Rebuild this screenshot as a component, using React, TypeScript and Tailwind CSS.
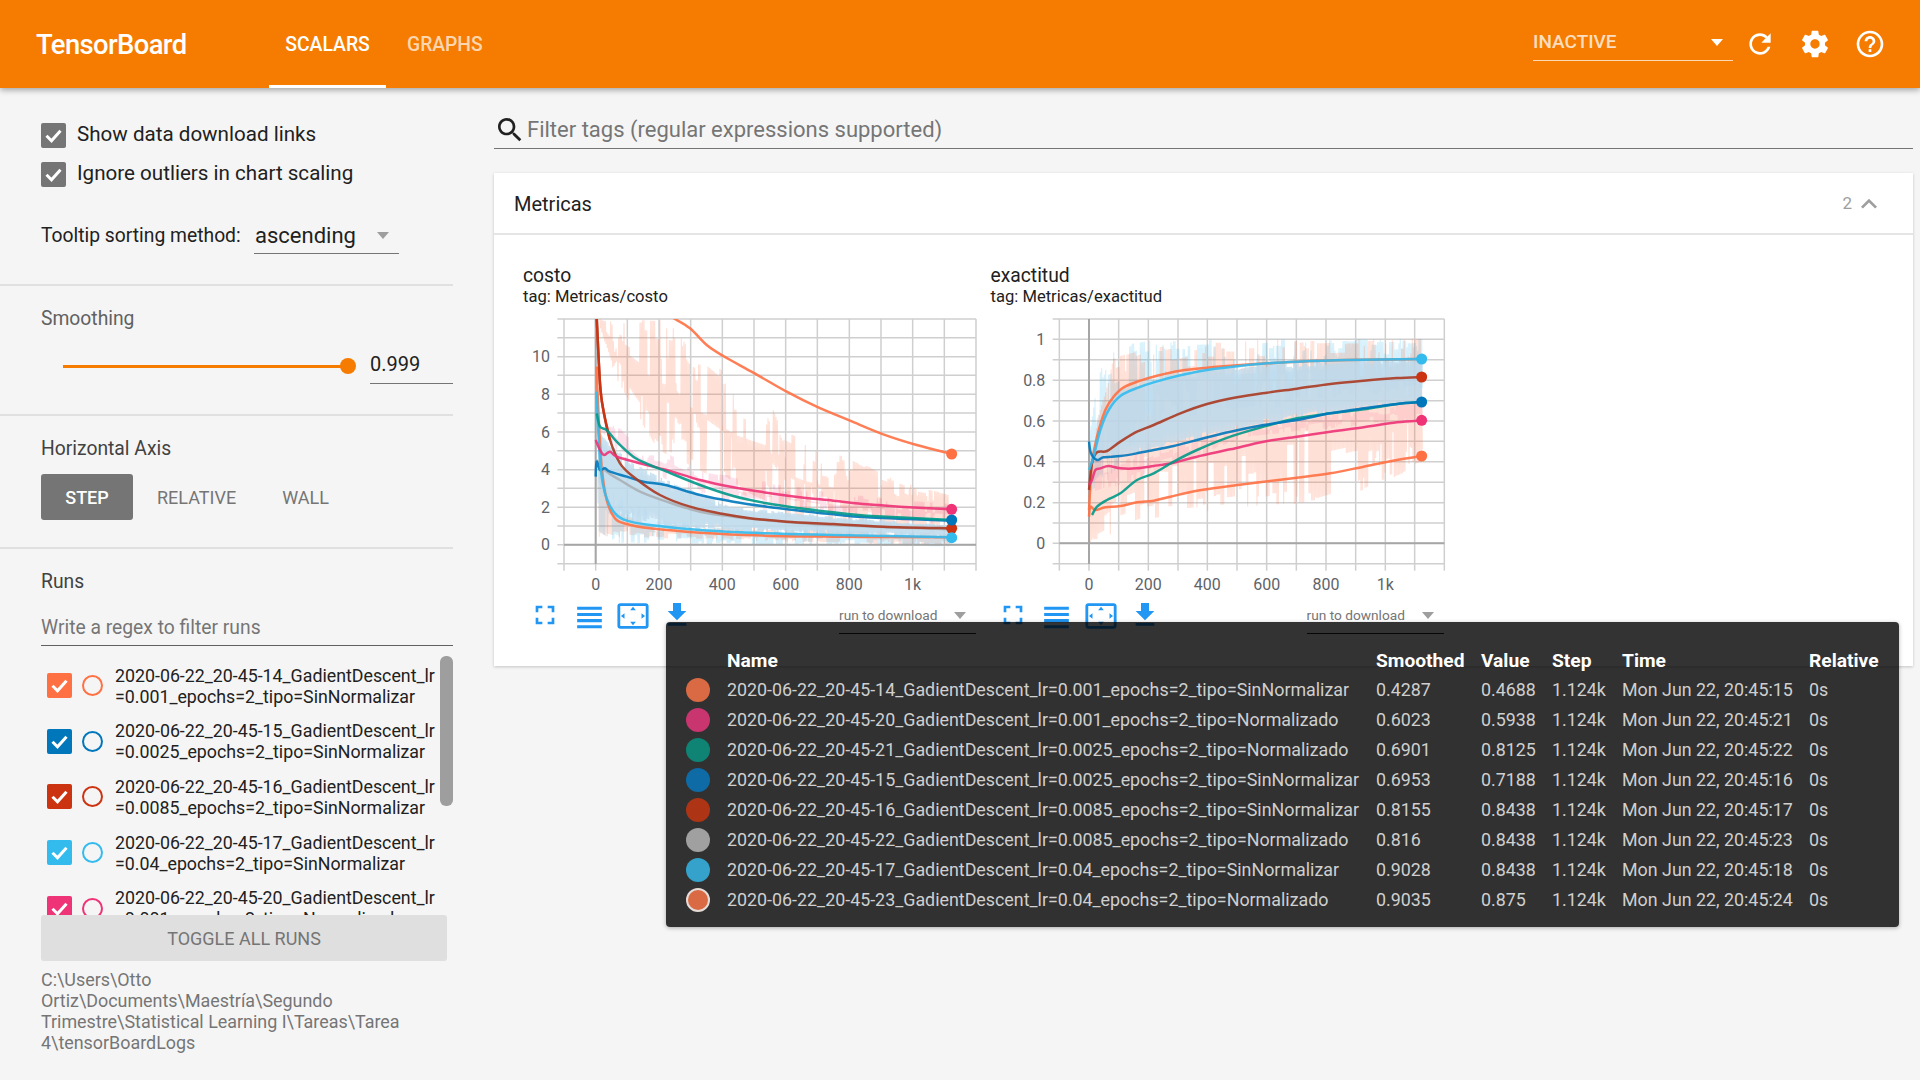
import React from "react";

type Pt = [number, number];

const ICONS = {
  refresh:
    "M17.65 6.35C16.2 4.9 14.21 4 12 4c-4.42 0-7.99 3.58-7.99 8s3.57 8 7.99 8c3.73 0 6.84-2.55 7.73-6h-2.08c-.82 2.33-3.04 4-5.65 4-3.31 0-6-2.69-6-6s2.69-6 6-6c1.66 0 3.14.69 4.22 1.78L13 11h7V4l-2.35 2.35z",
  settings:
    "M19.43 12.98c.04-.32.07-.64.07-.98s-.03-.66-.07-.98l2.11-1.65c.19-.15.24-.42.12-.64l-2-3.46c-.12-.22-.39-.3-.61-.22l-2.49 1c-.52-.4-1.08-.73-1.69-.98l-.38-2.65C14.46 2.18 14.25 2 14 2h-4c-.25 0-.46.18-.49.42l-.38 2.65c-.61.25-1.17.59-1.69.98l-2.49-1c-.23-.09-.49 0-.61.22l-2 3.46c-.13.22-.07.49.12.64l2.11 1.65c-.04.32-.07.65-.07.98s.03.66.07.98l-2.11 1.65c-.19.15-.24.42-.12.64l2 3.46c.12.22.39.3.61.22l2.49-1c.52.4 1.08.73 1.69.98l.38 2.65c.03.24.24.42.49.42h4c.25 0 .46-.18.49-.42l.38-2.65c.61-.25 1.17-.59 1.69-.98l2.49 1c.23.09.49 0 .61-.22l2-3.46c.12-.22.07-.49-.12-.64l-2.11-1.65zM12 15.5c-1.93 0-3.5-1.57-3.5-3.5s1.57-3.5 3.5-3.5 3.5 1.57 3.5 3.5-1.57 3.5-3.5 3.5z",
  help:
    "M11 18h2v-2h-2v2zm1-16C6.48 2 2 6.48 2 12s4.48 10 10 10 10-4.48 10-10S17.52 2 12 2zm0 18c-4.41 0-8-3.59-8-8s3.59-8 8-8 8 3.59 8 8-3.59 8-8 8zm0-14c-2.21 0-4 1.79-4 4h2c0-1.1.9-2 2-2s2 .9 2 2c0 2-3 1.75-3 5h2c0-2.25 3-2.5 3-5 0-2.21-1.79-4-4-4z",
  search:
    "M15.5 14h-.79l-.28-.27C15.41 12.59 16 11.11 16 9.5 16 5.91 13.09 3 9.5 3S3 5.91 3 9.5 5.91 16 9.5 16c1.61 0 3.09-.59 4.23-1.57l.27.28v.79l5 4.99L20.49 19l-4.99-5zm-6 0C7.01 14 5 11.99 5 9.5S7.01 5 9.5 5 14 7.01 14 9.5 11.99 14 9.5 14z",
  fullscreen: "M7 14H5v5h5v-2H7v-3zm-2-4h2V7h3V5H5v5zm12 7h-3v2h5v-5h-2v3zM14 5v2h3v3h2V5h-5z",
  headline: "M4 15h16v-2H4v2zm0 4h16v-2H4v2zm0-8h16V9H4v2zm0-6v2h16V5H4z",
  overscan:
    "M12.01 5.5L10 8h4l-1.99-2.5zM18 10v4l2.5-1.99L18 10zM6 10l-2.5 2.01L6 14v-4zm8 6h-4l2.01 2.5L14 16zm7-13H3c-1.1 0-2 .9-2 2v14c0 1.1.9 2 2 2h18c1.1 0 2-.9 2-2V5c0-1.1-.9-2-2-2zm0 16.01H3V4.99h18v14.02z",
  download: "M19 9h-4V3H9v6H5l7 7 7-7zM5 18v2h14v-2H5z",
  less: "M12 8l-6 6 1.41 1.41L12 10.83l4.59 4.58L18 14z",
};

function Icon({ d, className }: { d: string; className: string }) {
  return (
    <svg viewBox="0 0 24 24" className={className} fill="currentColor">
      <path d={d} />
    </svg>
  );
}

const C = {
  orange: "#ff7043",
  blue: "#0077bb",
  red: "#cc3311",
  brown: "#aa3a22",
  cyan: "#33bbee",
  pink: "#ee3377",
  teal: "#009988",
  grey: "#aab0b5",
};

// chart coordinates are traced at 3x screen pixels, hence the large numbers
function lerp(pts: Pt[], x: number) {
  if (x <= pts[0][0]) return pts[0][1];
  for (let i = 1; i < pts.length; i++) {
    if (x <= pts[i][0]) {
      const [x0, y0] = pts[i - 1];
      const [x1, y1] = pts[i];
      return y0 + ((y1 - y0) * (x - x0)) / (x1 - x0);
    }
  }
  return pts[pts.length - 1][1];
}

function smooth(p: Pt[]) {
  let d = `M${p[0][0]} ${p[0][1]}`;
  for (let i = 0; i < p.length - 1; i++) {
    const a = p[Math.max(i - 1, 0)];
    const b = p[i];
    const c = p[i + 1];
    const e = p[Math.min(i + 2, p.length - 1)];
    const c1x = b[0] + (c[0] - a[0]) / 6;
    const c1y = b[1] + (c[1] - a[1]) / 6;
    const c2x = c[0] - (e[0] - b[0]) / 6;
    const c2y = c[1] - (e[1] - b[1]) / 6;
    d += `C${c1x.toFixed(1)} ${c1y.toFixed(1)} ${c2x.toFixed(1)} ${c2y.toFixed(1)} ${c[0]} ${c[1]}`;
  }
  return d;
}

function rng(seed: number) {
  let s = seed;
  return () => {
    s = (s + 0x6d2b79f5) | 0;
    let t = Math.imul(s ^ (s >>> 15), 1 | s);
    t = (t + Math.imul(t ^ (t >>> 7), 61 | t)) ^ t;
    return ((t ^ (t >>> 14)) >>> 0) / 4294967296;
  };
}

type Band = { color: string; opacity: number; hi: Pt[]; lo: Pt[]; x0: number; x1: number; rough: number };

function bandPath(b: Band, seed: number) {
  const r = rng(seed);
  let d = "";
  let up = true;
  let jagHi = 0;
  let jagLo = 0;
  for (let x = b.x0; x <= b.x1; x += 2) {
    if (r() < 0.22) {
      jagHi = r() * r() * b.rough;
      jagLo = r() * r() * b.rough;
    }
    const hi = lerp(b.hi, x);
    const lo = lerp(b.lo, x);
    const span = lo - hi;
    const y = up ? hi + span * Math.min(jagHi, 0.48) : lo - span * Math.min(jagLo, 0.48);
    d += `${d ? "L" : "M"}${x} ${y.toFixed(1)}`;
    up = !up;
  }
  return d;
}

type ChartSpec = {
  id: string;
  vb: [number, number];
  xs: number[];
  xLabels: [number, string][];
  ys: number[];
  yLabels: [number, string][];
  labelRight: number;
  zeroX: number;
  zeroY: number;
  frame: [number, number, number, number];
  bands: Band[];
  lines: { color: string; pts: Pt[] }[];
  markers: { color: string; x: number; y: number }[];
};

const costoXs = [192, 287, 382, 477, 572, 667, 762, 857, 952, 1048, 1143, 1238, 1333, 1428];
const costoYs = [207, 263, 320, 376, 433, 489, 546, 602, 659, 715, 772, 828, 884, 941];
const exXs = [237, 326, 415, 504, 593, 681, 770, 859, 948, 1037, 1126, 1215, 1303, 1392];
const exYs = [207, 268, 329, 391, 452, 513, 574, 635, 697, 758, 819, 880, 941];

const costoBlueTop: Pt[] = [[296, 540], [330, 580], [400, 640], [500, 690], [700, 770], [1000, 800], [1350, 825]];
const costoBlueLow: Pt[] = [[296, 700], [320, 770], [350, 810], [500, 835], [1350, 862]];

const costo: ChartSpec = {
  id: "costo",
  vb: [69, 180],
  xs: costoXs,
  xLabels: [[287, "0"], [477, "200"], [667, "400"], [857, "600"], [1048, "800"], [1238, "1k"]],
  ys: costoYs,
  yLabels: [[320, "10"], [433, "8"], [546, "6"], [659, "4"], [772, "2"], [884, "0"]],
  labelRight: 150,
  zeroX: 287,
  zeroY: 884,
  frame: [172, 207, 1428, 950],
  bands: [
    {
      color: C.orange, opacity: 0.22, x0: 300, x1: 1350, rough: 0.9,
      hi: [[300, 207], [335, 207], [345, 300], [358, 207], [520, 207], [570, 300], [620, 320], [700, 390], [800, 410], [850, 540], [950, 590], [1050, 620], [1150, 670], [1250, 710], [1350, 730]],
      lo: [[300, 230], [340, 370], [400, 480], [470, 600], [560, 650], [650, 700], [760, 760], [900, 820], [1350, 860]],
    },
    {
      color: C.orange, opacity: 0.2, x0: 296, x1: 1350, rough: 0.7,
      hi: [[296, 600], [340, 780], [450, 825], [1350, 848]],
      lo: [[296, 860], [1350, 888]],
    },
    {
      color: C.cyan, opacity: 0.2, x0: 292, x1: 1350, rough: 0.8,
      hi: [[292, 500], [320, 700], [400, 760], [600, 830], [1350, 850]],
      lo: [[296, 860], [360, 880], [1350, 890]],
    },
    {
      color: C.pink, opacity: 0.15, x0: 296, x1: 1350, rough: 1.2,
      hi: [[296, 520], [360, 530], [430, 610], [480, 600], [600, 660], [800, 695], [1000, 730], [1350, 760]],
      lo: costoBlueTop,
    },
    { color: "#bcd9ec", opacity: 0.85, x0: 296, x1: 1350, rough: 0.2, hi: costoBlueTop, lo: costoBlueLow },
  ],
  lines: [
    { color: C.orange, pts: [[290, 350], [295, 480], [305, 650], [320, 750], [345, 805], [380, 822], [450, 835], [600, 848], [800, 857], [1000, 860], [1355, 862]] },
    { color: C.grey, pts: [[290, 630], [320, 665], [360, 690], [420, 725], [500, 755], [600, 785], [700, 800], [850, 815], [1000, 825], [1355, 838]] },
    { color: C.blue, pts: [[287, 680], [290, 635], [300, 660], [315, 655], [330, 665], [380, 680], [430, 695], [500, 706], [600, 735], [700, 755], [800, 770], [900, 782], [1000, 793], [1100, 802], [1355, 812]] },
    { color: C.brown, pts: [[290, 200], [300, 400], [310, 480], [330, 570], [360, 640], [400, 680], [480, 735], [570, 770], [670, 792], [760, 806], [860, 815], [1000, 822], [1150, 830], [1355, 835]] },
    { color: C.red, pts: [[290, 200], [300, 400], [310, 480], [330, 570]] },
    { color: C.cyan, pts: [[290, 425], [295, 550], [305, 680], [320, 745], [345, 790], [380, 812], [450, 825], [600, 840], [800, 850], [1000, 855], [1355, 862]] },
    { color: C.pink, pts: [[287, 570], [300, 600], [312, 615], [330, 605], [350, 620], [420, 640], [500, 660], [600, 690], [700, 712], [800, 728], [900, 742], [1000, 752], [1100, 763], [1200, 770], [1355, 778]] },
    { color: C.teal, pts: [[290, 490], [300, 530], [320, 540], [350, 575], [400, 620], [450, 645], [500, 665], [600, 705], [700, 738], [800, 760], [900, 775], [1000, 787], [1100, 797], [1355, 810]] },
    { color: C.orange, pts: [[500, 195], [525, 207], [570, 235], [620, 285], [670, 318], [760, 368], [860, 425], [950, 470], [1050, 512], [1150, 553], [1250, 585], [1355, 612]] },
  ],
  markers: [
    { color: C.orange, x: 1355, y: 612 },
    { color: C.pink, x: 1355, y: 778 },
    { color: C.red, x: 1355, y: 835 },
    { color: C.blue, x: 1355, y: 810 },
    { color: C.cyan, x: 1355, y: 863 },
  ],
};

const exTop: Pt[] = [[345, 600], [375, 480], [400, 440], [430, 415], [480, 395], [530, 380], [600, 365], [680, 355], [770, 347], [860, 340], [950, 335], [1100, 330], [1324, 327]];
const exBlue: Pt[] = [[345, 630], [370, 622], [420, 618], [470, 610], [520, 600], [580, 588], [650, 570], [750, 545], [850, 525], [950, 510], [1050, 490], [1150, 475], [1250, 462], [1324, 456]];

const exactitud: ChartSpec = {
  id: "exactitud",
  vb: [32, 180],
  xs: exXs,
  xLabels: [[326, "0"], [504, "200"], [681, "400"], [859, "600"], [1037, "800"], [1215, "1k"]],
  ys: exYs,
  yLabels: [[268, "1"], [391, "0.8"], [513, "0.6"], [635, "0.4"], [758, "0.2"], [880, "0"]],
  labelRight: 195,
  zeroX: 326,
  zeroY: 880,
  frame: [217, 207, 1392, 950],
  bands: [
    {
      color: C.cyan, opacity: 0.2, x0: 328, x1: 1326, rough: 0.8,
      hi: [[328, 540], [350, 380], [380, 290], [420, 285], [500, 270], [1326, 265]],
      lo: [[328, 740], [380, 700], [500, 520], [1326, 420]],
    },
    {
      color: C.orange, opacity: 0.22, x0: 328, x1: 1326, rough: 0.5,
      hi: [[328, 640], [350, 500], [400, 320], [500, 290], [650, 270], [1326, 265]],
      lo: [[328, 880], [400, 850], [500, 810], [650, 790], [800, 770], [1000, 765], [1150, 720], [1326, 650]],
    },
    { color: C.pink, opacity: 0.1, x0: 340, x1: 1326, rough: 0.9, hi: exBlue, lo: [[340, 730], [500, 680], [800, 560], [1326, 510]] },
    { color: "#bcd9ec", opacity: 0.85, x0: 345, x1: 1326, rough: 0.12, hi: exTop, lo: exBlue },
  ],
  lines: [
    { color: C.orange, pts: [[326, 800], [330, 770], [345, 780], [375, 772], [420, 768], [470, 757], [520, 752], [570, 740], [650, 722], [750, 708], [850, 695], [950, 683], [1050, 670], [1150, 650], [1250, 630], [1324, 618]] },
    { color: C.orange, pts: [[326, 780], [335, 640], [350, 560], [375, 480], [400, 440], [430, 412], [480, 392], [530, 377], [600, 362], [680, 353], [770, 346], [860, 340], [950, 335], [1100, 330], [1324, 327]] },
    { color: C.brown, pts: [[326, 720], [335, 640], [350, 607], [380, 603], [420, 575], [470, 545], [520, 525], [600, 490], [680, 462], [770, 442], [860, 428], [950, 416], [1050, 402], [1150, 392], [1250, 384], [1324, 381]] },
    { color: C.cyan, pts: [[326, 660], [340, 620], [360, 540], [385, 480], [420, 438], [470, 414], [520, 397], [600, 376], [680, 360], [770, 349], [860, 340], [950, 335], [1100, 330], [1324, 327]] },
    { color: C.pink, pts: [[326, 705], [335, 690], [345, 660], [360, 655], [385, 648], [420, 655], [470, 655], [520, 648], [580, 638], [650, 620], [750, 598], [850, 575], [950, 560], [1050, 545], [1150, 532], [1250, 517], [1324, 511]] },
    { color: C.teal, pts: [[335, 795], [350, 770], [380, 750], [420, 730], [470, 690], [520, 670], [580, 635], [650, 600], [750, 560], [850, 530], [950, 505], [1050, 490], [1150, 478], [1250, 462], [1324, 456]] },
    { color: C.blue, pts: [[326, 575], [332, 610], [350, 630], [370, 622], [420, 618], [470, 610], [520, 600], [580, 588], [650, 570], [750, 545], [850, 525], [950, 510], [1050, 490], [1150, 475], [1250, 462], [1324, 456]] },
  ],
  markers: [
    { color: C.orange, x: 1324, y: 618 },
    { color: C.pink, x: 1324, y: 511 },
    { color: C.blue, x: 1324, y: 456 },
    { color: C.red, x: 1324, y: 381 },
    { color: C.cyan, x: 1324, y: 327 },
  ],
};

function Plot({ spec }: { spec: ChartSpec }) {
  const [l, t, r, b] = spec.frame;
  const gridLeft = spec.xs[0];
  return (
    <svg
      viewBox={`${spec.vb[0]} ${spec.vb[1]} 1402.5 860`}
      className="block w-[467.5px] h-[286.67px]"
      fontFamily="Roboto, sans-serif"
    >
      <defs>
        <clipPath id={`clip-${spec.id}`}>
          <rect x={l} y={t} width={r - l} height={b - t} />
        </clipPath>
      </defs>
      {spec.ys.map((y) => (
        <line key={y} x1={l} x2={r} y1={y} y2={y} stroke="#cfcfcf" strokeWidth={4.5} />
      ))}
      {spec.xs.map((x) => (
        <line key={x} x1={x} x2={x} y1={t} y2={b + 12} stroke="#cfcfcf" strokeWidth={4.5} />
      ))}
      <g clipPath={`url(#clip-${spec.id})`}>
        {spec.bands.map((band, i) => (
          <path
            key={i}
            d={bandPath(band, 17 + i * 31)}
            fill="none"
            stroke={band.color}
            strokeOpacity={band.opacity}
            strokeWidth={3.4}
            strokeLinejoin="bevel"
          />
        ))}
      </g>
      <line x1={gridLeft} x2={r} y1={spec.zeroY} y2={spec.zeroY} stroke="#a6a6a6" strokeWidth={6} />
      <line x1={spec.zeroX} x2={spec.zeroX} y1={t} y2={b - 8} stroke="#a6a6a6" strokeWidth={6} />
      <g clipPath={`url(#clip-${spec.id})`}>
        {spec.lines.map((line, i) => (
          <path key={i} d={smooth(line.pts)} fill="none" stroke={line.color} strokeOpacity={0.9} strokeWidth={7.5} strokeLinejoin="round" />
        ))}
      </g>
      {spec.markers.map((m) => (
        <circle key={m.color} cx={m.x} cy={m.y} r={16.5} fill={m.color} />
      ))}
      {spec.xLabels.map(([x, label]) => (
        <text key={label} x={x} y={1020} textAnchor="middle" fontSize={48} fill="#5f6368">
          {label}
        </text>
      ))}
      {spec.yLabels.map(([y, label]) => (
        <text key={label} x={spec.labelRight} y={y + 17} textAnchor="end" fontSize={48} fill="#5f6368">
          {label}
        </text>
      ))}
    </svg>
  );
}

function Chart({ title, tag, spec }: { title: string; tag: string; spec: ChartSpec }) {
  return (
    <div className="w-[467.5px]">
      <div className="text-[19.3px] leading-6 text-[#212121]">{title}</div>
      <div className="text-[16.6px] leading-[20px] -mt-px mb-[3px] text-[#212121]">{tag}</div>
      <Plot spec={spec} />
      <div className="flex h-[37px] items-center">
        <div className="flex text-[#2196f3] pt-1">
          <div className="w-11 flex justify-center"><Icon d={ICONS.fullscreen} className="w-8 h-8" /></div>
          <div className="w-11 flex justify-center"><Icon d={ICONS.headline} className="w-[37px] h-[37px] -mx-1" /></div>
          <div className="w-11 flex justify-center"><Icon d={ICONS.overscan} className="w-[34px] h-[34px] -mx-1" /></div>
          <div className="w-11 flex justify-center"><Icon d={ICONS.download} className="w-8 h-8" /></div>
        </div>
        <div className="ml-[140px] w-[137px] h-[37px] border-b border-[#212121] flex items-center justify-between pr-[10px] pt-[2px]">
          <span className="text-[13.7px] text-[#757575]">run to download</span>
          <Caret className="border-t-[#9e9e9e]" />
        </div>
      </div>
    </div>
  );
}

function Caret({ className }: { className: string }) {
  return <div className={`w-0 h-0 border-x-[6.5px] border-x-transparent border-t-[7px] ${className}`} />;
}

function Check({ className }: { className: string }) {
  return (
    <div className={`w-[25px] h-[25px] rounded-[2px] shrink-0 flex items-center justify-center ${className}`}>
      <svg viewBox="0 0 25 25" className="w-[25px] h-[25px]" fill="none">
        <path d="M5.5 12.8l5 5L19.5 7.8" stroke="#fff" strokeWidth="3" />
      </svg>
    </div>
  );
}

const RUNS = [
  { a: "2020-06-22_20-45-14_GadientDescent_lr", b: "=0.001_epochs=2_tipo=SinNormalizar", box: "bg-[#ff7043]", ring: "border-[#ff7043]" },
  { a: "2020-06-22_20-45-15_GadientDescent_lr", b: "=0.0025_epochs=2_tipo=SinNormalizar", box: "bg-[#0077bb]", ring: "border-[#0077bb]" },
  { a: "2020-06-22_20-45-16_GadientDescent_lr", b: "=0.0085_epochs=2_tipo=SinNormalizar", box: "bg-[#cc3311]", ring: "border-[#cc3311]" },
  { a: "2020-06-22_20-45-17_GadientDescent_lr", b: "=0.04_epochs=2_tipo=SinNormalizar", box: "bg-[#33bbee]", ring: "border-[#33bbee]" },
  { a: "2020-06-22_20-45-20_GadientDescent_lr", b: "=0.001_epochs=2_tipo=Normalizado", box: "bg-[#ee3377]", ring: "border-[#ee3377]" },
];

const ROWS = [
  { dot: "bg-[#d96a43]", name: "2020-06-22_20-45-14_GadientDescent_lr=0.001_epochs=2_tipo=SinNormalizar", smoothed: "0.4287", value: "0.4688", time: "Mon Jun 22, 20:45:15" },
  { dot: "bg-[#c8356f]", name: "2020-06-22_20-45-20_GadientDescent_lr=0.001_epochs=2_tipo=Normalizado", smoothed: "0.6023", value: "0.5938", time: "Mon Jun 22, 20:45:21" },
  { dot: "bg-[#0f8474]", name: "2020-06-22_20-45-21_GadientDescent_lr=0.0025_epochs=2_tipo=Normalizado", smoothed: "0.6901", value: "0.8125", time: "Mon Jun 22, 20:45:22" },
  { dot: "bg-[#0f6ba5]", name: "2020-06-22_20-45-15_GadientDescent_lr=0.0025_epochs=2_tipo=SinNormalizar", smoothed: "0.6953", value: "0.7188", time: "Mon Jun 22, 20:45:16" },
  { dot: "bg-[#ad3516]", name: "2020-06-22_20-45-16_GadientDescent_lr=0.0085_epochs=2_tipo=SinNormalizar", smoothed: "0.8155", value: "0.8438", time: "Mon Jun 22, 20:45:17" },
  { dot: "bg-[#a0a0a0]", name: "2020-06-22_20-45-22_GadientDescent_lr=0.0085_epochs=2_tipo=Normalizado", smoothed: "0.816", value: "0.8438", time: "Mon Jun 22, 20:45:23" },
  { dot: "bg-[#34a2cb]", name: "2020-06-22_20-45-17_GadientDescent_lr=0.04_epochs=2_tipo=SinNormalizar", smoothed: "0.9028", value: "0.8438", time: "Mon Jun 22, 20:45:18" },
  { dot: "bg-[#d96a43] border-2 border-[#e6dcd7]", name: "2020-06-22_20-45-23_GadientDescent_lr=0.04_epochs=2_tipo=Normalizado", smoothed: "0.9035", value: "0.875", time: "Mon Jun 22, 20:45:24" },
];

const TIP_GRID = "grid grid-cols-[41px_649px_105px_71px_70px_187px_1fr] items-center";

function Tooltip() {
  return (
    <div className="absolute left-[666px] top-[622px] w-[1233px] h-[305px] z-20 rounded-[4px] bg-black/80 pl-5 pt-[25px] text-[17.85px] text-[#cfcfcf] shadow-[0_1px_4px_rgba(0,0,0,.3)]">
      <div className={`${TIP_GRID} h-7 text-[19.2px] font-bold text-white`}>
        <div />
        <div>Name</div>
        <div>Smoothed</div>
        <div>Value</div>
        <div>Step</div>
        <div>Time</div>
        <div>Relative</div>
      </div>
      {ROWS.map((row) => (
        <div key={row.name} className={`${TIP_GRID} h-[30px]`}>
          <div className={`w-6 h-6 rounded-full box-border ${row.dot}`} />
          <div className="whitespace-nowrap">{row.name}</div>
          <div>{row.smoothed}</div>
          <div>{row.value}</div>
          <div>1.124k</div>
          <div className="whitespace-nowrap">{row.time}</div>
          <div>0s</div>
        </div>
      ))}
    </div>
  );
}

function Sidebar() {
  return (
    <aside className="w-[494px] shrink-0 pr-[41px]">
      <section className="h-[198px] pl-[41px] pt-[35px] border-b-2 border-[#e0e0e0]">
        <div className="flex items-center h-[25px] gap-[11px]">
          <Check className="bg-[#757575]" />
          <span className="text-[20.6px] text-[#212121] -mt-[2px]">Show data download links</span>
        </div>
        <div className="flex items-center h-[25px] mt-[14px] gap-[11px]">
          <Check className="bg-[#757575]" />
          <span className="text-[20.6px] text-[#212121] -mt-[2px]">Ignore outliers in chart scaling</span>
        </div>
        <div className="flex items-start mt-[30px]">
          <span className="text-[19.3px] leading-[38px] w-[213px] text-[#212121]">Tooltip sorting method:</span>
          <div className="w-[145px] h-[37px] border-b border-[#757575] flex items-center justify-between pl-px pr-[10px]">
            <span className="text-[22px] text-[#212121]">ascending</span>
            <Caret className="border-t-[#9e9e9e]" />
          </div>
        </div>
      </section>

      <section className="h-[130px] pl-[41px] pt-[21px] border-b-2 border-[#e0e0e0]">
        <div className="text-[19.3px] leading-6 text-[#616161]">Smoothing</div>
        <div className="flex items-center mt-[15px] h-[38px] relative">
          <div className="ml-[22px] w-[285px] h-[3px] bg-[#f57c00] relative mt-[2px]">
            <div className="absolute -right-[8px] -top-[6.5px] w-4 h-4 rounded-full bg-[#f57c00]" />
          </div>
          <div className="ml-[22px] w-[83px] h-[38px] border-b border-[#757575] text-[20px] leading-[37px] text-[#212121]">0.999</div>
        </div>
      </section>

      <section className="h-[133px] pl-[41px] pt-[21px] border-b-2 border-[#e0e0e0]">
        <div className="text-[19.3px] leading-6 text-[#424242]">Horizontal Axis</div>
        <div className="flex items-center mt-[13px] text-[18px] text-[#757575]">
          <div className="w-[92px] h-[46px] rounded-[3px] bg-[#757575] text-white font-medium flex items-center justify-center">STEP</div>
          <div className="ml-[24px]">RELATIVE</div>
          <div className="ml-[46px]">WALL</div>
        </div>
      </section>

      <section className="pl-[41px] pt-[21px]">
        <div className="text-[19.3px] leading-6 text-[#424242]">Runs</div>
        <div className="h-[37px] mt-[15px] border-b border-[#616161] text-[19.3px] leading-[38px] text-[#757575]">Write a regex to filter runs</div>
        <div className="h-[269px] overflow-hidden pt-[18.5px] relative">
          {RUNS.map((run) => (
            <div key={run.a} className="flex h-[55.7px] items-start">
              <div className="flex items-center h-[42px] ml-[6px]">
                <Check className={run.box} />
              </div>
              <div className="h-[42px] flex items-center">
                <div className={`ml-[10px] w-[21px] h-[21px] rounded-full border-2 ${run.ring}`} />
              </div>
              <div className="ml-[12px] text-[17.8px] leading-[21px] text-[#212121] whitespace-nowrap">
                {run.a}
                <br />
                {run.b}
              </div>
            </div>
          ))}
          <div className="absolute right-0 top-[10px] w-[13px] h-[150px] rounded-[6px] bg-[#9e9e9e]" />
        </div>
        <div className="w-[406px] h-[46px] rounded-[3px] bg-[#dfdfdf] text-[18px] text-[#757575] flex items-center justify-center">TOGGLE ALL RUNS</div>
        <div className="mt-[8px] w-[400px] text-[17.9px] leading-[21px] text-[#757575]">
          C:\Users\Otto
          <br />
          Ortiz\Documents\Maestría\Segundo
          <br />
          Trimestre\Statistical Learning I\Tareas\Tarea
          <br />
          4\tensorBoardLogs
        </div>
      </section>
    </aside>
  );
}

export default function App() {
  return (
    <div className="relative w-[1920px] h-[1080px] overflow-hidden bg-[#f5f5f5] font-[Roboto,sans-serif]">
      <header className="relative z-10 h-[88px] bg-[#f57c00] text-white flex items-center shadow-[0_2px_6px_rgba(0,0,0,.35)]">
        <div className="ml-9 w-[233px] text-[27.4px] font-medium tracking-[-0.6px] pt-[3px]">TensorBoard</div>
        <div className="w-[117px] h-full flex items-center justify-center border-b-[3px] border-white text-[19.4px] font-medium pt-[5px]">SCALARS</div>
        <div className="ml-[21px] text-[19.3px] font-medium text-white/70 pt-[2px]">GRAPHS</div>
        <div className="ml-auto w-[200px] h-[36px] border-b border-white/70 flex items-center justify-between pr-[10px] -mt-[2px]">
          <span className="text-[19px] font-medium text-white/75">INACTIVE</span>
          <Caret className="border-t-white" />
        </div>
        <div className="flex items-center ml-[11px] mr-[34px]">
          <Icon d={ICONS.refresh} className="w-8 h-8" />
          <Icon d={ICONS.settings} className="w-8 h-8 ml-[23px]" />
          <Icon d={ICONS.help} className="w-8 h-8 ml-[23px]" />
        </div>
      </header>

      <div className="flex">
        <Sidebar />
        <main className="w-[1419px]">
          <div className="h-[61px] border-b border-[#757575] flex items-center pt-[23px]">
            <Icon d={ICONS.search} className="w-8 h-8 text-[#212121]" />
            <span className="ml-px text-[22px] text-[#757575]">Filter tags (regular expressions supported)</span>
          </div>
          <div className="mt-6 h-[493px] bg-white shadow-[0_1px_3px_rgba(0,0,0,.2)]">
            <div className="h-[62px] border-b-2 border-[#e5e5e5] flex items-center pl-5 pr-[28px] pt-[2px]">
              <span className="text-[20px] text-[#212121]">Metricas</span>
              <span className="ml-auto text-[17px] text-[#9e9e9e]">2</span>
              <Icon d={ICONS.less} className="w-8 h-8 text-[#9e9e9e] ml-px" />
            </div>
            <div className="flex pl-[29px] pt-[29px]">
              <Chart title="costo" tag="tag: Metricas/costo" spec={costo} />
              <Chart title="exactitud" tag="tag: Metricas/exactitud" spec={exactitud} />
            </div>
          </div>
        </main>
      </div>

      <Tooltip />
    </div>
  );
}
